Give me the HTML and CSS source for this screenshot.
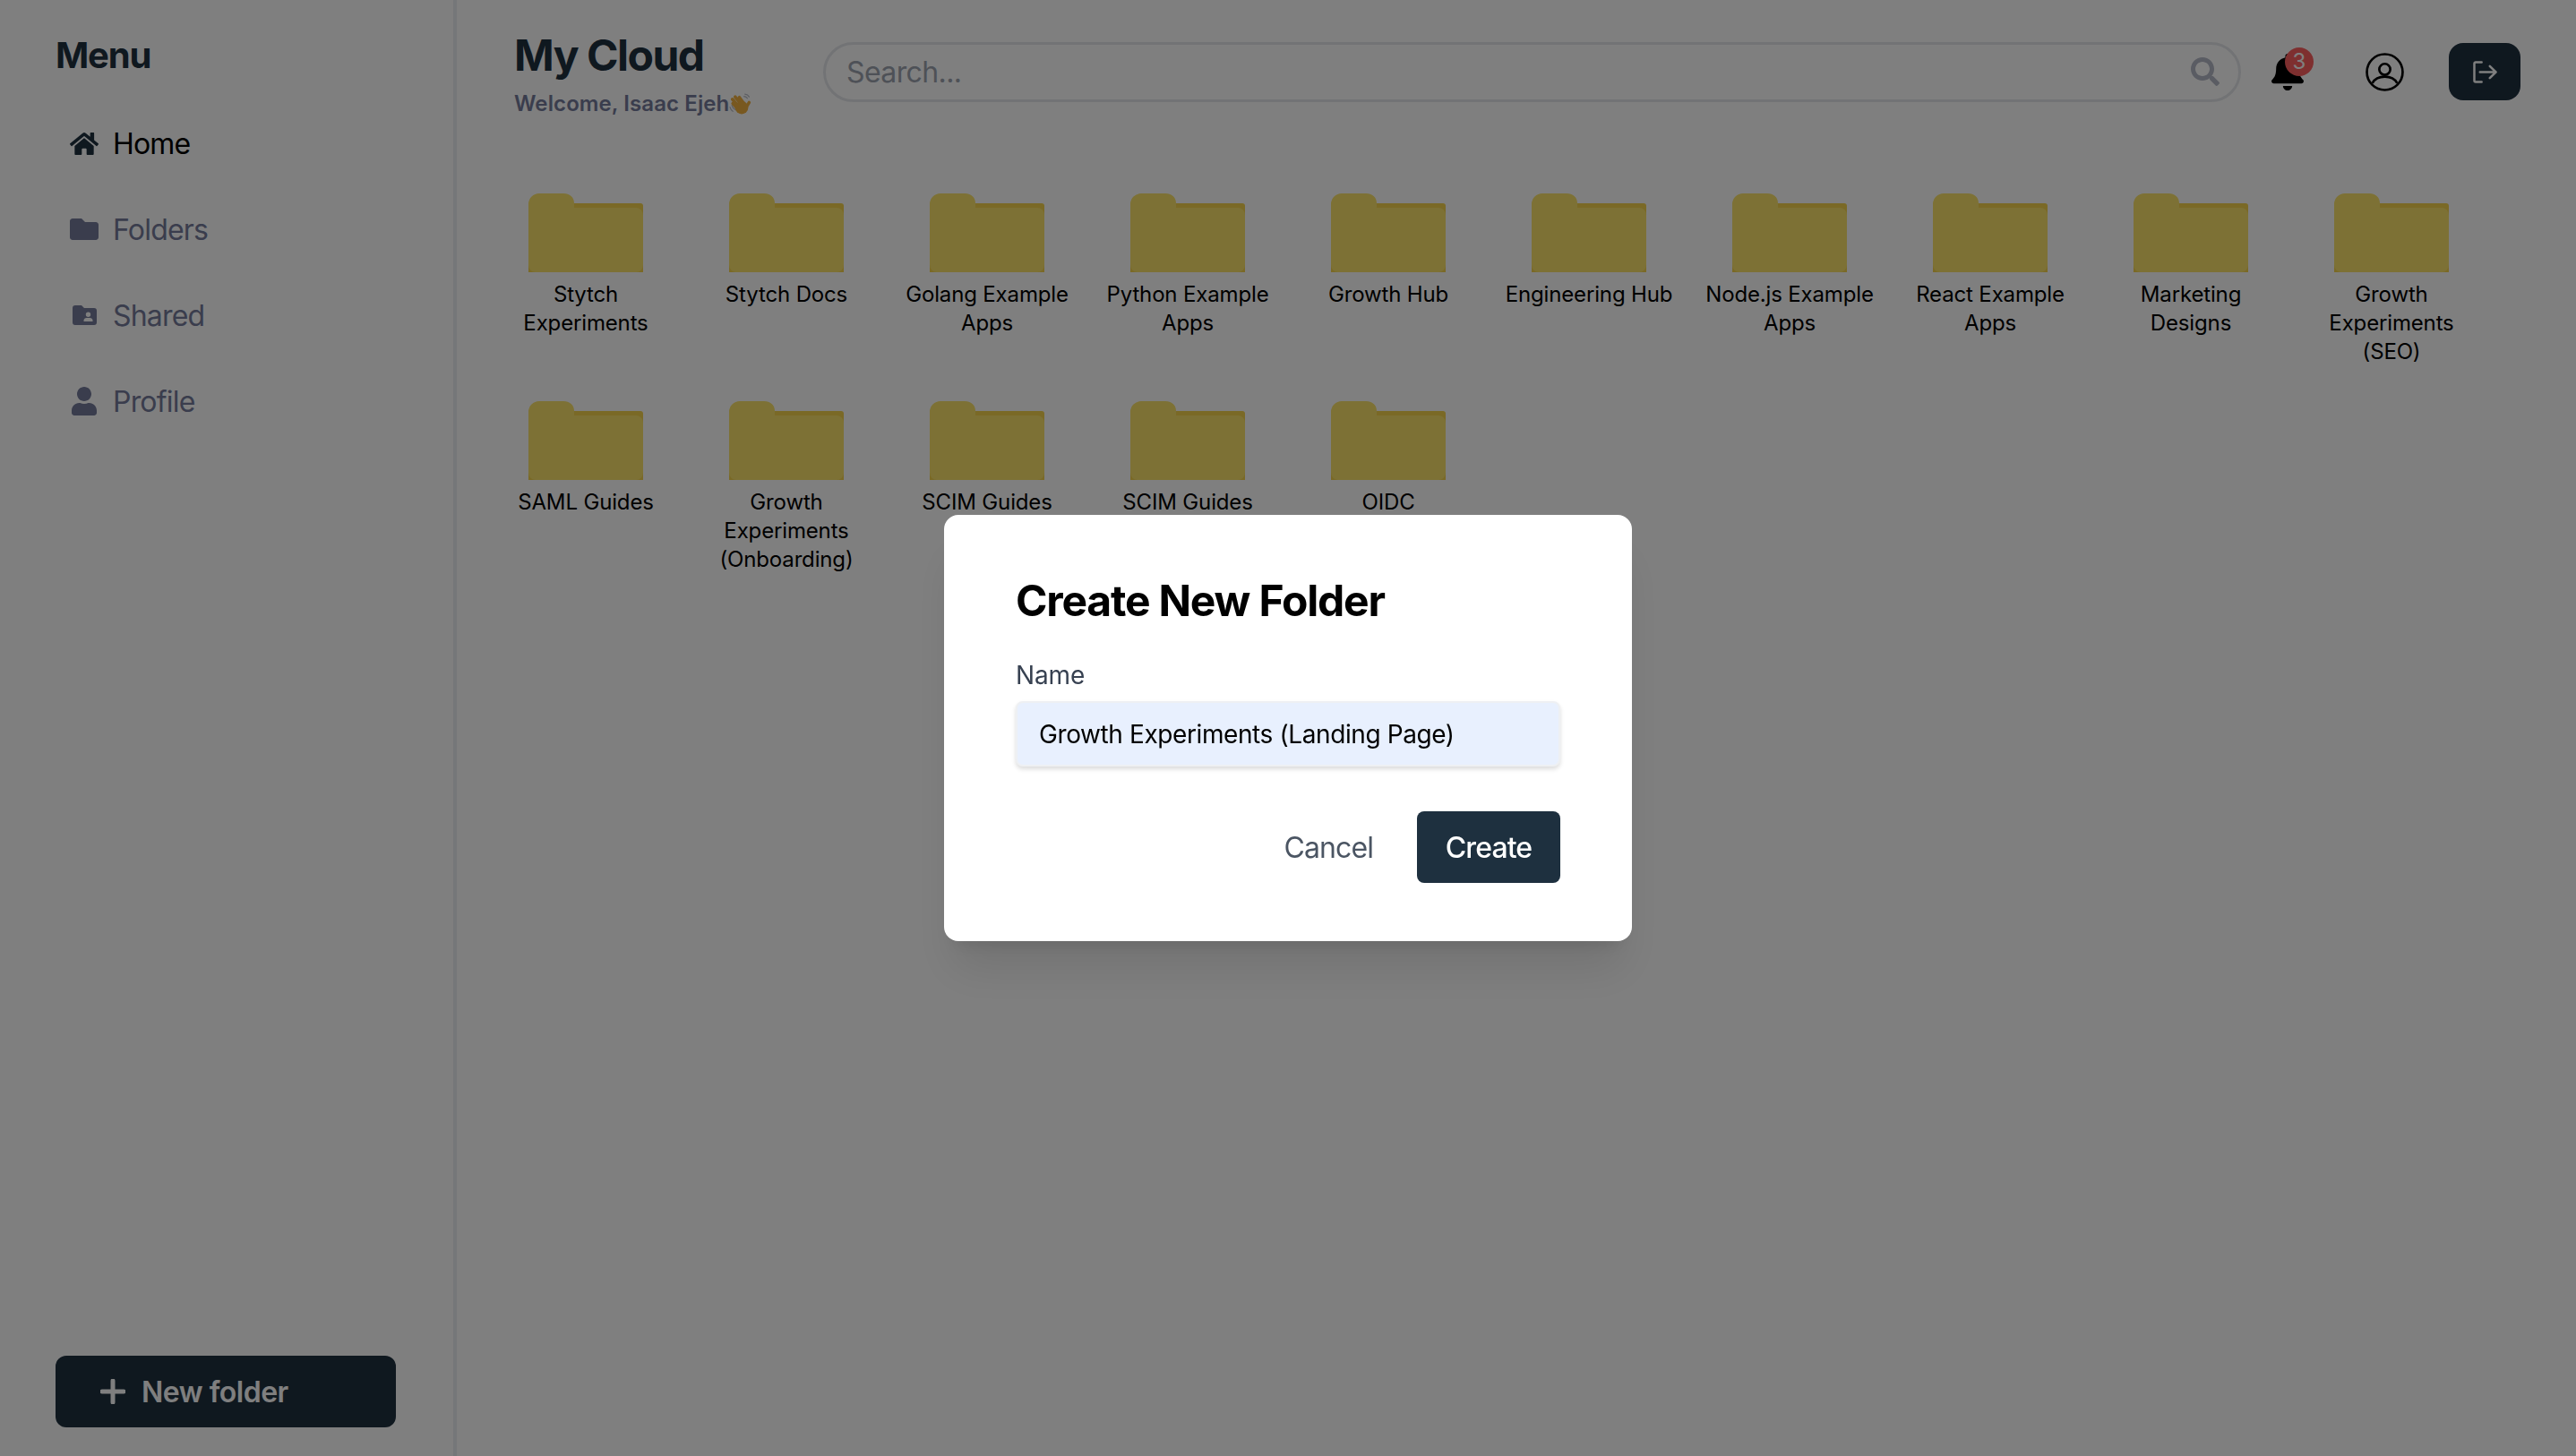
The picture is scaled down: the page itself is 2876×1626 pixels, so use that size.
FILE: index.html
```html
<!DOCTYPE html>
<html lang="en">
<head>
<meta charset="utf-8">
<title>My Cloud</title>
<link rel="stylesheet" href="styles.css">
</head>
<body>
<div class="app">
  <aside class="sidebar">
    <h2 class="menu-title">Menu</h2>
    <nav class="nav">
      <a class="nav-item active"><span class="nav-icon"><svg class="i-home" viewBox="0 0 576 512"><path d="M280.37 148.26L96 300.11V464a16 16 0 0 0 16 16l112.06-.29a16 16 0 0 0 15.92-16V368a16 16 0 0 1 16-16h64a16 16 0 0 1 16 16v95.64a16 16 0 0 0 16 16.05L464 480a16 16 0 0 0 16-16V300L295.67 148.26a12.19 12.19 0 0 0-15.3 0zM571.6 251.47L488 182.56V44.05a12 12 0 0 0-12-12h-56a12 12 0 0 0-12 12v72.61L318.47 43a48 48 0 0 0-61 0L4.34 251.47a12 12 0 0 0-1.6 16.9l25.5 31A12 12 0 0 0 45.15 301l235.22-193.74a12.19 12.19 0 0 1 15.3 0L530.9 301a12 12 0 0 0 16.9-1.6l25.5-31a12 12 0 0 0-1.7-16.93z"/></svg></span>Home</a>
      <a class="nav-item"><span class="nav-icon"><svg class="i-folder" viewBox="0 0 512 512"><path d="M464 128H272l-64-64H48C21.49 64 0 85.49 0 112v288c0 26.51 21.49 48 48 48h416c26.51 0 48-21.49 48-48V176c0-26.51-21.49-48-48-48z"/></svg></span>Folders</a>
      <a class="nav-item"><span class="nav-icon"><svg class="i-shared" viewBox="0 0 27 22"><path fill-rule="evenodd" d="M3 0h7l3 3h11a3 3 0 0 1 3 3v13a3 3 0 0 1-3 3H3a3 3 0 0 1-3-3V3a3 3 0 0 1 3-3zm14.500 7.500a2.700 2.700 0 1 0 0 5.400 2.700 2.700 0 0 0 0-5.400zM12.500 18h10v-1.200c0-1.700-1.500-2.800-3-2.800h-4c-1.500 0-3 1.100-3 2.800z"/></svg></span>Shared</a>
      <a class="nav-item"><span class="nav-icon"><svg class="i-user" viewBox="0 0 448 512"><path d="M224 256c70.700 0 128-57.300 128-128S294.700 0 224 0 96 57.300 96 128s57.300 128 128 128zm89.600 32h-16.700c-22.200 10.200-46.900 16-72.900 16s-50.600-5.800-72.900-16h-16.700C60.200 288 0 348.200 0 422.400V464c0 26.500 21.500 48 48 48h352c26.500 0 48-21.500 48-48v-41.600c0-74.200-60.200-134.400-134.400-134.400z"/></svg></span>Profile</a>
    </nav>
    <button class="new-folder" type="button"><svg class="i-plus" viewBox="0 0 28 28"><path d="M14 2v24M2 14h24"/></svg>New folder</button>
  </aside>

  <main class="main">
    <header class="header">
      <div class="title-block">
        <h1 class="title">My Cloud</h1>
        <p class="welcome">Welcome, Isaac Ejeh<svg class="i-wave" viewBox="0 0 24 24"><path class="wave-line" d="M1 15c.5 2 1.500 3.500 3 4.500M3 13c.5 2 2 4 4 5M17 1c2 .2 3.500 1.200 4.500 3M16 3.500c1.500 0 2.500.7 3.500 2"/><path class="wave-hand" d="M9.500 17 4 11M10 14 3.500 6.500M12.500 11.500 6.500 4M15.500 10.500 11 4.500M18.500 15l3-5"/><circle class="wave-palm" cx="13.500" cy="15.500" r="7"/></svg></p>
      </div>
      <div class="search">
        <span class="search-text">Search...</span>
        <svg class="i-search" viewBox="0 0 512 512"><path d="M505 442.700L405.300 343c-4.500-4.500-10.600-7-17-7H372c27.600-35.300 44-79.700 44-128C416 93.100 322.900 0 208 0S0 93.100 0 208s93.100 208 208 208c48.300 0 92.700-16.400 128-44v16.300c0 6.400 2.500 12.500 7 17l99.700 99.700c9.400 9.400 24.600 9.400 33.900 0l28.300-28.300c9.400-9.400 9.400-24.600.1-34zM208 336c-70.700 0-128-57.200-128-128 0-70.700 57.200-128 128-128 70.700 0 128 57.200 128 128 0 70.700-57.200 128-128 128z"/></svg>
      </div>
      <div class="bell">
        <svg class="i-bell" viewBox="0 0 448 512"><path d="M224 512c35.320 0 63.970-28.650 63.970-64H160.030c0 35.350 28.650 64 63.970 64zm215.390-149.710c-19.320-20.760-55.470-51.990-55.470-154.290 0-77.700-54.480-139.900-127.940-155.160V32c0-17.670-14.320-32-31.980-32s-31.980 14.330-31.980 32v20.840C118.560 68.100 64.080 130.300 64.080 208c0 102.300-36.150 133.530-55.470 154.290-6 6.450-8.660 14.160-8.610 21.710.11 16.400 12.980 32 32.100 32h383.800c19.120 0 32-15.600 32.100-32 .05-7.550-2.610-15.270-8.610-21.710z"/></svg>
        <span class="badge">3</span>
      </div>
      <svg class="i-account" viewBox="0 0 42 42"><circle cx="21" cy="21" r="19.500"/><circle cx="21" cy="18" r="6"/><path d="M7.500 33c2.500-4.500 7.500-7 13.500-7s11 2.500 13.500 7"/></svg>
      <button class="logout" type="button"><svg class="i-logout" viewBox="0 0 28 26"><path d="M10 1.500H3a1.500 1.500 0 0 0-1.500 1.500v20A1.500 1.500 0 0 0 3 24.500h7M8 13h18M19.500 6l7 7-7 7"/></svg></button>
    </header>

    <section class="grid">
      <div class="folder"><svg class="folder-art" viewBox="0 0 128 88"><use href="#folder-shape"/></svg><span class="folder-name">Stytch Experiments</span></div>
      <div class="folder"><svg class="folder-art" viewBox="0 0 128 88"><use href="#folder-shape"/></svg><span class="folder-name">Stytch Docs</span></div>
      <div class="folder"><svg class="folder-art" viewBox="0 0 128 88"><use href="#folder-shape"/></svg><span class="folder-name">Golang Example Apps</span></div>
      <div class="folder"><svg class="folder-art" viewBox="0 0 128 88"><use href="#folder-shape"/></svg><span class="folder-name">Python Example Apps</span></div>
      <div class="folder"><svg class="folder-art" viewBox="0 0 128 88"><use href="#folder-shape"/></svg><span class="folder-name">Growth Hub</span></div>
      <div class="folder"><svg class="folder-art" viewBox="0 0 128 88"><use href="#folder-shape"/></svg><span class="folder-name">Engineering Hub</span></div>
      <div class="folder"><svg class="folder-art" viewBox="0 0 128 88"><use href="#folder-shape"/></svg><span class="folder-name">Node.js Example Apps</span></div>
      <div class="folder"><svg class="folder-art" viewBox="0 0 128 88"><use href="#folder-shape"/></svg><span class="folder-name">React Example Apps</span></div>
      <div class="folder"><svg class="folder-art" viewBox="0 0 128 88"><use href="#folder-shape"/></svg><span class="folder-name">Marketing Designs</span></div>
      <div class="folder"><svg class="folder-art" viewBox="0 0 128 88"><use href="#folder-shape"/></svg><span class="folder-name">Growth Experiments (SEO)</span></div>
      <div class="folder"><svg class="folder-art" viewBox="0 0 128 88"><use href="#folder-shape"/></svg><span class="folder-name">SAML Guides</span></div>
      <div class="folder"><svg class="folder-art" viewBox="0 0 128 88"><use href="#folder-shape"/></svg><span class="folder-name">Growth Experiments (Onboarding)</span></div>
      <div class="folder"><svg class="folder-art" viewBox="0 0 128 88"><use href="#folder-shape"/></svg><span class="folder-name">SCIM Guides</span></div>
      <div class="folder"><svg class="folder-art" viewBox="0 0 128 88"><use href="#folder-shape"/></svg><span class="folder-name">SCIM Guides</span></div>
      <div class="folder"><svg class="folder-art" viewBox="0 0 128 88"><use href="#folder-shape"/></svg><span class="folder-name">OIDC</span></div>
    </section>
  </main>
</div>

<svg class="defs" aria-hidden="true">
  <defs>
    <g id="folder-shape">
      <path class="folder-back" d="M40 11h85a3 3 0 0 1 3 3v74H0V40z"/>
      <path class="folder-front" d="M12 0h27c7 0 12 4 12 11v5h69a8 8 0 0 1 8 8v56a8 8 0 0 1-8 8H8a8 8 0 0 1-8-8V12A12 12 0 0 1 12 0z"/>
    </g>
  </defs>
</svg>

<div class="overlay">
  <form class="modal">
    <h3 class="modal-title">Create New Folder</h3>
    <label class="field-label" for="name">Name</label>
    <input class="field-input" id="name" type="text" value="Growth Experiments (Landing Page)">
    <div class="modal-actions">
      <button class="btn-cancel" type="button">Cancel</button>
      <button class="btn-create" type="button">Create</button>
    </div>
  </form>
</div>
</body>
</html>
```

FILE: styles.css
```css
* { box-sizing: border-box; }
html, body { margin: 0; height: 100%; }
body {
  font-family: Inter, "Liberation Sans", sans-serif;
  background: #fff;
  color: #000;
  overflow: hidden;
}
h1, h2, h3, p { margin: 0; }
button { font-family: inherit; border: 0; cursor: pointer; }
svg { display: block; fill: currentColor; }
.defs { position: absolute; width: 0; height: 0; }

.app { display: flex; height: 100vh; }

/* Sidebar */
.sidebar {
  width: 510px;
  flex: none;
  display: flex;
  flex-direction: column;
  padding: 38px 66px 32px 62px;
  border-right: 4px solid #eaeef2;
}
.menu-title {
  font-size: 40px;
  line-height: 48px;
  font-weight: 700;
  color: #1e303f;
  letter-spacing: -1.2px;
}
.nav { display: flex; flex-direction: column; margin-top: 26px; }
.nav-item {
  height: 96px;
  display: flex;
  align-items: center;
  gap: 16px;
  padding-left: 16px;
  font-size: 32px;
  letter-spacing: -0.8px;
  color: #747a9a;
}
.nav-item.active { color: #000; }
.nav-item.active .nav-icon { color: #1e303f; }
.nav-icon { width: 32px; height: 32px; display: flex; align-items: center; justify-content: center; }
.i-home { width: 32px; height: 29px; }
.i-folder { width: 32px; height: 32px; }
.i-shared { width: 27px; height: 22px; }
.i-user { width: 28px; height: 32px; }

.new-folder {
  margin-top: auto;
  height: 80px;
  width: 380px;
  flex: none;
  display: flex;
  align-items: center;
  gap: 18px;
  padding-left: 50px;
  border-radius: 12px;
  background: #1e303f;
  color: #fff;
  font-size: 32px;
  font-weight: 600;
  letter-spacing: -0.5px;
}
.i-plus { width: 28px; height: 28px; fill: none; stroke: currentColor; stroke-width: 5; stroke-linecap: round; }

/* Main */
.main { flex: 1; min-width: 0; }
.header {
  display: flex;
  align-items: center;
  height: 160px;
  padding: 0 62px 0 64px;
}
.title-block { width: 345px; flex: none; padding-top: 4px; }
.title {
  font-size: 48px;
  line-height: 60px;
  font-weight: 700;
  color: #1e303f;
  letter-spacing: -1.5px;
}
.welcome {
  display: flex;
  align-items: center;
  margin-top: 8px;
  font-size: 24px;
  line-height: 32px;
  font-weight: 600;
  letter-spacing: 0.1px;
  color: #747a9a;
}
.i-wave { width: 25px; height: 25px; flex: none; }
.wave-line { fill: none; stroke: #b9bcc6; stroke-width: 1.2; stroke-linecap: round; }
.wave-hand { fill: none; stroke: #f0b040; stroke-width: 3.4; stroke-linecap: round; }
.wave-palm { fill: #f0b040; }

.search {
  flex: 1;
  height: 67px;
  display: flex;
  align-items: center;
  justify-content: space-between;
  padding: 0 21px 0 23px;
  border: 3px solid #e5e7eb;
  border-radius: 34px;
  font-size: 32px;
  letter-spacing: -0.6px;
  color: #9ca3af;
}
.i-search { width: 32px; height: 32px; color: #b4b8c6; }

.bell { position: relative; width: 36px; height: 41px; flex: none; margin-left: 34px; color: #000; }
.i-bell { width: 36px; height: 41px; }
.badge {
  position: absolute;
  top: -7px;
  right: -11px;
  width: 32px;
  height: 32px;
  border-radius: 50%;
  background: #fd5f5f;
  color: #fff;
  font-size: 24px;
  line-height: 32px;
  text-align: center;
}
.i-account { width: 43px; height: 43px; flex: none; margin-left: 69px; fill: none; stroke: #000; stroke-width: 2.6; }
.logout {
  width: 80px;
  height: 64px;
  flex: none;
  margin-left: 50px;
  display: flex;
  align-items: center;
  justify-content: center;
  border-radius: 16px;
  background: #1e303f;
}
.i-logout { width: 27px; height: 25px; fill: none; stroke: #fff; stroke-width: 2.6; stroke-linecap: round; stroke-linejoin: round; }

/* Folder grid */
.grid {
  display: grid;
  grid-template-columns: repeat(10, 192px);
  column-gap: 32px;
  row-gap: 39px;
  padding: 56px 0 0 48px;
}
.folder { display: flex; flex-direction: column; align-items: center; text-align: center; }
.folder-art { width: 128px; height: 88px; }
.folder-back { fill: #f4d24d; }
.folder-front { fill: #fae26a; }
.folder-name {
  margin-top: 9px;
  font-size: 24px;
  line-height: 32px;
  letter-spacing: -0.15px;
  color: #000;
}

/* Modal */
.overlay {
  position: fixed;
  inset: 0;
  display: flex;
  align-items: center;
  justify-content: center;
  background: rgba(0, 0, 0, 0.5);
}
.modal {
  width: 768px;
  height: 476px;
  display: flex;
  flex-direction: column;
  padding: 66px 80px 64px;
  border-radius: 16px;
  background: #fff;
  box-shadow: 0 40px 50px -10px rgba(0, 0, 0, 0.1), 0 16px 20px -12px rgba(0, 0, 0, 0.1);
}
.modal-title {
  font-size: 48px;
  line-height: 60px;
  font-weight: 700;
  color: #000;
  letter-spacing: -1.2px;
}
.field-label {
  margin-top: 33px;
  font-size: 28px;
  line-height: 40px;
  letter-spacing: -0.15px;
  color: #374151;
}
.field-input {
  width: 608px;
  height: 73px;
  margin-top: 9px;
  padding: 0 24px;
  border: 2px solid #eef0f3;
  border-radius: 8px;
  background: #e8f0fe;
  box-shadow: 0 3px 5px rgba(0, 0, 0, 0.14);
  font-family: inherit;
  font-size: 28px;
  letter-spacing: -0.4px;
  color: #000;
  outline: none;
}
.modal-actions {
  display: flex;
  justify-content: flex-end;
  align-items: center;
  gap: 49px;
  margin-top: 50px;
}
.btn-cancel {
  padding: 0;
  background: none;
  font-size: 32px;
  letter-spacing: -0.9px;
  color: #4b5563;
}
.btn-create {
  width: 160px;
  height: 80px;
  border-radius: 8px;
  background: #1e303f;
  color: #fff;
  font-size: 32px;
  font-weight: 500;
  letter-spacing: -0.9px;
}
```
